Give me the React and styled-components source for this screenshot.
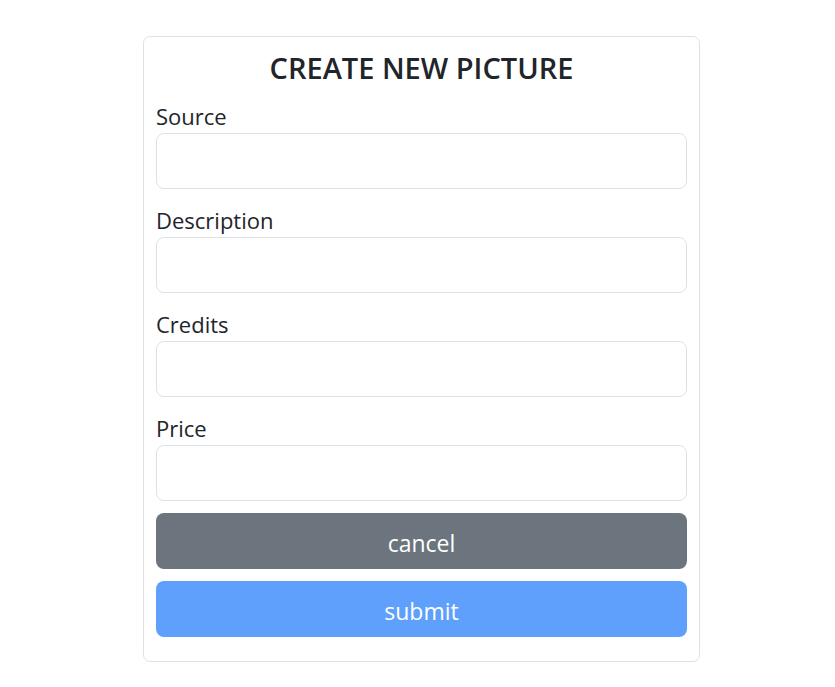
import React from 'react'
import styled, { createGlobalStyle } from 'styled-components'

const GlobalStyle = createGlobalStyle`
  body {
    margin: 0;
    background: #fff;
    font-family: "Open Sans", "Noto Sans", sans-serif;
    color: #212529;
  }
`

const Page = styled.main`
  display: flex;
  justify-content: center;
  padding: 36px 0 0 8px;
`

const Card = styled.form`
  width: 557px;
  box-sizing: border-box;
  border: 1px solid #dee2e6;
  border-radius: 7px;
  padding: 12px 12px 24px;
  display: flex;
  flex-direction: column;
`

const Title = styled.h3`
  margin: 2px 0 18px;
  font-size: 29px;
  font-weight: 600;
  line-height: 34px;
  text-align: center;
`

const Field = styled.div`
  display: flex;
  flex-direction: column;
  margin-bottom: 18px;
`

const Label = styled.label`
  font-size: 22px;
  line-height: 26px;
  margin-bottom: 4px;
`

const Input = styled.input`
  height: 56px;
  box-sizing: border-box;
  border: 1px solid #dee2e6;
  border-radius: 8px;
  padding: 0 16px;
  font: inherit;
  font-size: 20px;
`

const Button = styled.button`
  height: 56px;
  border: none;
  border-radius: 8px;
  padding-top: 4px;
  margin-top: ${p => (p.$first ? '-6px' : '12px')};
  background: ${p => p.$bg};
  color: #fff;
  font-family: inherit;
  font-size: 23px;
`

const fields = ['Source', 'Description', 'Credits', 'Price']

export default function App() {
  return (
    <>
      <GlobalStyle />
      <Page>
        <Card>
          <Title>CREATE NEW PICTURE</Title>
          {fields.map(f => (
            <Field key={f}>
              <Label>{f}</Label>
              <Input />
            </Field>
          ))}
          <Button type="button" $first $bg="#6c757d">cancel</Button>
          <Button type="button" $bg="#5fa0fd">submit</Button>
        </Card>
      </Page>
    </>
  )
}
